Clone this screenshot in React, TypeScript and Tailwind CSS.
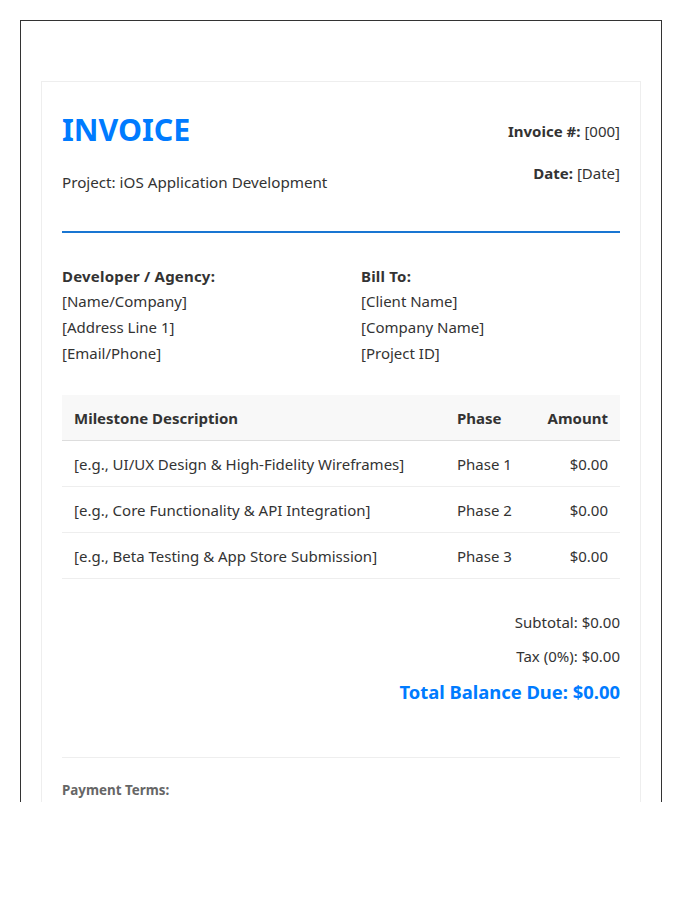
const font = "font-['Noto_Sans','Open_Sans',sans-serif]";

const milestones = [
  { desc: "[e.g., UI/UX Design & High-Fidelity Wireframes]", phase: "Phase 1", amount: "$0.00" },
  { desc: "[e.g., Core Functionality & API Integration]", phase: "Phase 2", amount: "$0.00" },
  { desc: "[e.g., Beta Testing & App Store Submission]", phase: "Phase 3", amount: "$0.00" },
];

export default function App() {
  return (
    <div className={`${font} bg-white w-[700px] h-[900px] pt-5 pl-5 text-[15px] text-[#333]`}>
      <div className="w-[642px] h-[782px] overflow-hidden border border-b-0 border-[#333] px-5 pt-[60px]">
        <div className="border border-[#eee] p-5 pt-[22px] h-[800px]">
          {/* header */}
          <div className="flex justify-between border-b-2 border-[#1976d2] h-[129px]">
            <div>
              <h1 className="text-[30.4px] leading-[51px] font-bold text-[#007bff]">INVOICE</h1>
              <p className="mt-[17px] leading-[20px] text-[15.2px]">Project: iOS Application Development</p>
            </div>
            <div className="text-right pt-[17px]">
              <p className="leading-[20px]"><strong>Invoice #:</strong> [000]</p>
              <p className="leading-[20px] mt-[22px]"><strong>Date:</strong> [Date]</p>
            </div>
          </div>

          {/* parties */}
          <div className="flex mt-[30px] leading-[26px]">
            <div className="w-[299px]">
              <strong className="block h-[25px] tracking-[0.2px]">Developer / Agency:</strong>
              <div>[Name/Company]</div>
              <div>[Address Line 1]</div>
              <div>[Email/Phone]</div>
            </div>
            <div>
              <strong className="block h-[25px] tracking-[0.2px]">Bill To:</strong>
              <div>[Client Name]</div>
              <div>[Company Name]</div>
              <div>[Project ID]</div>
            </div>
          </div>

          {/* milestones */}
          <table className="w-full mt-[29px] border-collapse">
            <thead>
              <tr className="bg-[#f8f8f8] border-b border-[#ddd] h-[45px]">
                <th className="text-left font-bold pl-3 pt-0.5">Milestone Description</th>
                <th className="text-left font-bold w-[76px] pt-0.5">Phase</th>
                <th className="text-right font-bold pr-3 w-[87px] pt-0.5">Amount</th>
              </tr>
            </thead>
            <tbody>
              {milestones.map((m) => (
                <tr key={m.phase} className="border-b border-[#eee] h-[46px]">
                  <td className="pl-3 pt-0.5">{m.desc}</td>
                  <td className="pt-0.5">{m.phase}</td>
                  <td className="text-right pr-3 pt-0.5">{m.amount}</td>
                </tr>
              ))}
            </tbody>
          </table>

          {/* totals */}
          <div className="text-right mt-[33px]">
            <p className="leading-[20px]">Subtotal: $0.00</p>
            <p className="leading-[20px] mt-[14px]">Tax (0%): $0.00</p>
            <p className="leading-[28px] mt-[12px] text-[18.4px] font-bold text-[#007bff]">Total Balance Due: $0.00</p>
          </div>

          {/* terms */}
          <div className="border-t border-[#eee] mt-[51px] pt-[22px]">
            <p className="text-[13.4px] leading-[20px] font-bold text-[#666]">Payment Terms:</p>
          </div>
        </div>
      </div>
    </div>
  );
}
